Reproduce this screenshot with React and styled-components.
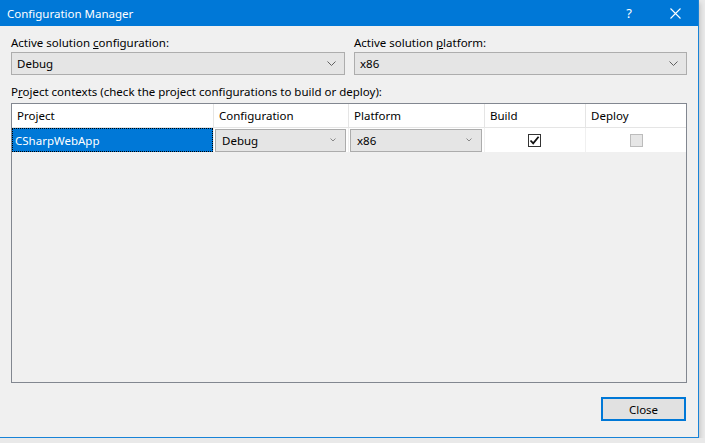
import React from 'react';
import styled, { createGlobalStyle } from 'styled-components';

const GlobalStyle = createGlobalStyle`
  html, body {
    margin: 0;
    padding: 0;
    background: #e9e9e9;
  }
  body {
    font-family: "Noto Sans", "Segoe UI", sans-serif;
    font-size: 11.5px;
    color: #000;
  }
`;

const columns = [
  { key: 'project', title: 'Project', width: 202 },
  { key: 'config', title: 'Configuration', width: 135 },
  { key: 'platform', title: 'Platform', width: 136 },
  { key: 'build', title: 'Build', width: 101 },
  { key: 'deploy', title: 'Deploy', width: 100 },
];

const gridColumns = columns.map((c) => `${c.width}px`).join(' ');

export default function App() {
  return (
    <>
      <GlobalStyle />
      <Window>
        <TitleBar>
          <Title>Configuration Manager</Title>
          <TitleButton>?</TitleButton>
          <TitleButton>
            <svg width="11" height="11" viewBox="0 0 11 11">
              <path d="M0.5 0.5 L10.5 10.5 M10.5 0.5 L0.5 10.5" stroke="#fff" strokeWidth="1.1" />
            </svg>
          </TitleButton>
        </TitleBar>
        <Content>
          <TopRow>
            <Field>
              <Label>Active solution <u>c</u>onfiguration:</Label>
              <Combo>
                <span>Debug</span>
                <Chevron />
              </Combo>
            </Field>
            <Field>
              <Label>Active solution <u>p</u>latform:</Label>
              <Combo>
                <span>x86</span>
                <Chevron />
              </Combo>
            </Field>
          </TopRow>
          <ContextLabel>P<u>r</u>oject contexts (check the project configurations to build or deploy):</ContextLabel>
          <Grid>
            <HeaderRow>
              {columns.map((c) => (
                <HeaderCell key={c.key}>{c.title}</HeaderCell>
              ))}
            </HeaderRow>
            <DataRow>
              <Cell>
                <SelectedCell>CSharpWebApp</SelectedCell>
              </Cell>
              <Cell>
                <CellCombo>
                  <span>Debug</span>
                  <Chevron small />
                </CellCombo>
              </Cell>
              <Cell>
                <CellCombo>
                  <span>x86</span>
                  <Chevron small />
                </CellCombo>
              </Cell>
              <Cell center>
                <CheckBox>
                  <svg width="11" height="11" viewBox="0 0 11 11">
                    <path d="M1.5 5.5 L4.2 8.4 L9.6 1.8" fill="none" stroke="#111" strokeWidth="1.8" />
                  </svg>
                </CheckBox>
              </Cell>
              <Cell center>
                <CheckBox disabled />
              </Cell>
            </DataRow>
          </Grid>
          <Footer>
            <Button>Close</Button>
          </Footer>
        </Content>
      </Window>
    </>
  );
}

function Chevron({ small }) {
  const w = small ? 6 : 9;
  const h = small ? 3.5 : 5;
  return (
    <ChevronWrap>
      <svg width={w} height={h} viewBox={`0 0 ${w} ${h}`}>
        <path
          d={`M0.5 0.5 L${w / 2} ${h - 0.5} L${w - 0.5} 0.5`}
          fill="none"
          stroke={small ? '#888' : '#606060'}
          strokeWidth="1"
        />
      </svg>
    </ChevronWrap>
  );
}

const Window = styled.div`
  width: 698px;
  height: 437px;
  background: #f0f0f0;
  border-right: 1px solid #1883d7;
  border-bottom: 1px solid #1883d7;
  box-shadow: 1px 3px 5px rgba(0, 0, 0, 0.18);
  display: flex;
  flex-direction: column;
`;

const TitleBar = styled.div`
  height: 26px;
  background: #0078d7;
  color: #fff;
  display: flex;
  align-items: center;
  padding-left: 7px;
`;

const Title = styled.div`
  flex: 1;
  font-size: 11.5px;
`;

const TitleButton = styled.div`
  width: 46px;
  height: 26px;
  display: flex;
  align-items: center;
  justify-content: center;
  font-size: 13px;
`;

const Content = styled.div`
  flex: 1;
  padding: 9px 11px 0 11px;
  display: flex;
  flex-direction: column;
`;

const TopRow = styled.div`
  display: grid;
  grid-template-columns: 334px 333px;
  column-gap: 9px;
`;

const Field = styled.div`
  display: flex;
  flex-direction: column;
`;

const Label = styled.div`
  height: 17px;
  line-height: 16px;
`;

const Combo = styled.div`
  height: 21px;
  border: 1px solid #adadad;
  background: #e5e5e5;
  display: flex;
  align-items: center;
  padding: 0 8px 0 5px;
  span {
    flex: 1;
  }
`;

const ChevronWrap = styled.div`
  display: flex;
  align-items: center;
`;

const ContextLabel = styled.div`
  margin-top: 9px;
  height: 19px;
  line-height: 16px;
`;

const Grid = styled.div`
  width: 674px;
  height: 278px;
  border: 1px solid #828790;
  background: #f0f0f0;
`;

const HeaderRow = styled.div`
  display: grid;
  grid-template-columns: ${gridColumns};
  height: 24px;
  background: #fff;
  border-bottom: 1px solid #e5e5e5;
  box-sizing: border-box;
`;

const HeaderCell = styled.div`
  border-right: 1px solid #e5e5e5;
  padding-left: 5px;
  display: flex;
  align-items: center;
  &:last-child {
    border-right: none;
  }
`;

const DataRow = styled.div`
  display: grid;
  grid-template-columns: ${gridColumns};
  height: 25px;
  background: #fff;
  border-bottom: 1px solid #f0f0f0;
  box-sizing: border-box;
`;

const Cell = styled.div`
  border-right: 1px solid #f0f0f0;
  display: flex;
  align-items: center;
  justify-content: ${(p) => (p.center ? 'center' : 'stretch')};
  &:last-child {
    border-right: none;
  }
`;

const SelectedCell = styled.div`
  flex: 1;
  align-self: stretch;
  background: #0078d7;
  color: #fff;
  border: 1px dotted #000;
  display: flex;
  align-items: center;
  padding-left: 2px;
`;

const CellCombo = styled.div`
  flex: 1;
  margin: 0 2px 0 1px;
  height: 21px;
  border: 1px solid #acacac;
  background: #e5e5e5;
  display: flex;
  align-items: center;
  padding: 0 9px 0 6px;
  span {
    flex: 1;
  }
`;

const CheckBox = styled.div`
  width: 11px;
  height: 11px;
  border: 1px solid ${(p) => (p.disabled ? '#bcbcbc' : '#333')};
  background: ${(p) => (p.disabled ? '#e6e6e6' : '#fff')};
  display: flex;
  align-items: center;
  justify-content: center;
  margin-left: ${(p) => (p.disabled ? '0' : '-1px')};
`;

const Footer = styled.div`
  display: flex;
  justify-content: flex-end;
  padding-top: 14px;
  padding-right: 1px;
`;

const Button = styled.div`
  width: 81px;
  height: 20px;
  border: 2px solid #0078d7;
  background: #e1e1e1;
  display: flex;
  align-items: center;
  justify-content: center;
`;
